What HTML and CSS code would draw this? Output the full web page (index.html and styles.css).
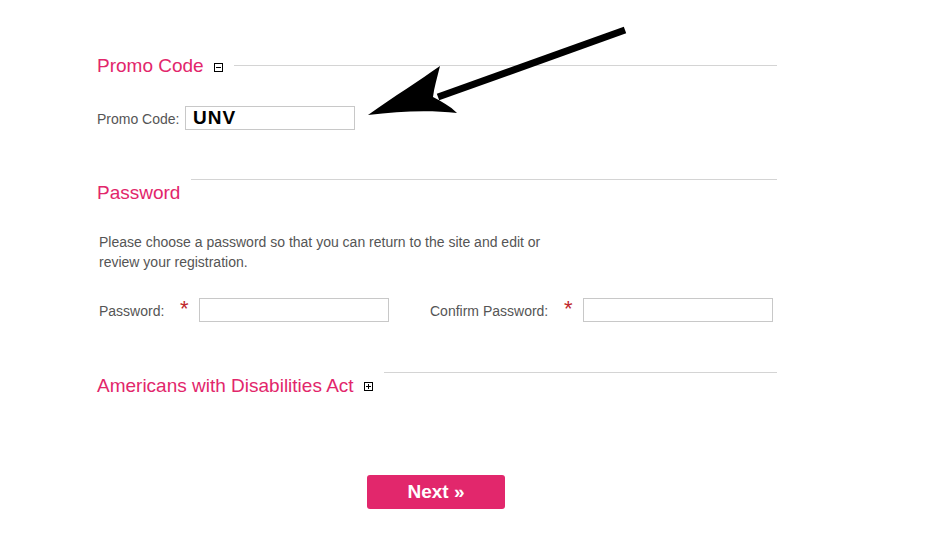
FILE: index.html
```html
<!DOCTYPE html>
<html>
<head>
<meta charset="utf-8">
<link rel="stylesheet" href="styles.css">
</head>
<body>
<div class="page">
  <section class="sec sec-promo">
    <div class="head head-center">
      <h2 class="title">Promo Code</h2>
      <span class="toggle"><svg width="9" height="9" viewBox="0 0 9 9"><rect x="0.5" y="0.5" width="8" height="8" fill="#fff" stroke="#000"/><path d="M2 4.5h5" stroke="#000"/></svg></span>
      <span class="rule"></span>
    </div>
    <div class="row promo-row">
      <label class="lbl lbl-promo">Promo Code:</label>
      <div class="input promo-input">UNV</div>
    </div>
  </section>

  <section class="sec sec-pass">
    <div class="head head-top">
      <h2 class="title title-low">Password</h2>
      <span class="rule"></span>
    </div>
    <p class="desc">Please choose a password so that you can return to the site and edit or review your registration.</p>
    <div class="row pass-row">
      <label class="lbl lbl-pass">Password:</label>
      <span class="req">*</span>
      <div class="input pw-input"></div>
      <label class="lbl lbl-confirm">Confirm Password:</label>
      <span class="req">*</span>
      <div class="input pw-input"></div>
    </div>
  </section>

  <section class="sec sec-ada">
    <div class="head head-top">
      <h2 class="title title-low">Americans with Disabilities Act</h2>
      <span class="toggle toggle-low"><svg width="9" height="9" viewBox="0 0 9 9"><rect x="0.5" y="0.5" width="8" height="8" fill="#fff" stroke="#000"/><path d="M2 4.5h5M4.5 2v5" stroke="#000"/></svg></span>
      <span class="rule"></span>
    </div>
  </section>

  <div class="actions">
    <button class="next">Next »</button>
  </div>
</div>

<svg class="arrow" width="931" height="542" viewBox="0 0 931 542">
  <path d="M625 30 L438 97" stroke="#000" stroke-width="7" fill="none"/>
  <path d="M368 115 C395 96 420 80 440 66 C437 78 434 88 433 97 C441 101 450 106 457 113 C430 110 400 111 368 115 Z" fill="#000"/>
</svg>
</body>
</html>
```
FILE: styles.css
```css
html, body {
  margin: 0;
  padding: 0;
  background: #fff;
}
body {
  font-family: "Liberation Sans", Arial, sans-serif;
  color: #555;
  position: relative;
  width: 931px;
  height: 542px;
  overflow: hidden;
}
.page {
  width: 680px;
  margin-left: 97px;
  padding-top: 54px;
}
.sec { margin: 0; }
.head {
  display: flex;
  height: 22px;
}
.head-center { align-items: center; }
.head-top { align-items: flex-start; }
.title {
  margin: 0;
  padding-top: 2px;
  font-weight: normal;
  font-size: 19px;
  line-height: 22px;
  color: #e2266b;
  white-space: nowrap;
}
.title-low { margin-top: 2px; padding-top: 1px; }
.toggle {
  display: flex;
  margin-left: 10px;
  margin-top: 5px;
}
.toggle-low { margin-top: 10px; }
.rule {
  flex: 1;
  height: 1px;
  background: #d4d4d4;
  margin-left: 11px;
}
.row {
  display: flex;
  align-items: center;
}
.promo-row { margin-top: 30px; }
.lbl {
  font-size: 14px;
  line-height: 16px;
  padding-top: 2px;
  color: #555;
}
.lbl-promo { width: 88px; }
.input {
  box-sizing: border-box;
  border: 1px solid #c8c8c8;
  background: #fff;
  height: 24px;
}
.promo-input {
  width: 170px;
  font-weight: bold;
  font-size: 19px;
  letter-spacing: 1px;
  color: #000;
  line-height: 22px;
  padding-left: 7px;
}
.sec-pass { margin-top: 49px; }
.desc {
  margin: 31px 0 0 2px;
  width: 460px;
  font-size: 14px;
  line-height: 20px;
  color: #555;
}
.pass-row {
  margin-top: 26px;
  margin-left: 2px;
}
.lbl-pass { width: 81px; }
.lbl-confirm { width: 134px; margin-left: 41px; }
.req {
  width: 19px;
  color: #c0272d;
  font-size: 22px;
  line-height: 16px;
  padding-top: 0;
  height: 18px;
}
.pw-input { width: 190px; height: 24px; }
.sec-ada { margin-top: 50px; }
.actions {
  display: flex;
  margin-top: 81px;
  padding-left: 270px;
}
.next {
  width: 138px;
  height: 34px;
  border: none;
  border-radius: 3px;
  background: #e2276c;
  color: #fff;
  font-family: "Liberation Sans", Arial, sans-serif;
  font-weight: bold;
  font-size: 19px;
  padding: 0;
}
.arrow {
  position: absolute;
  left: 0;
  top: 0;
  pointer-events: none;
}
```
